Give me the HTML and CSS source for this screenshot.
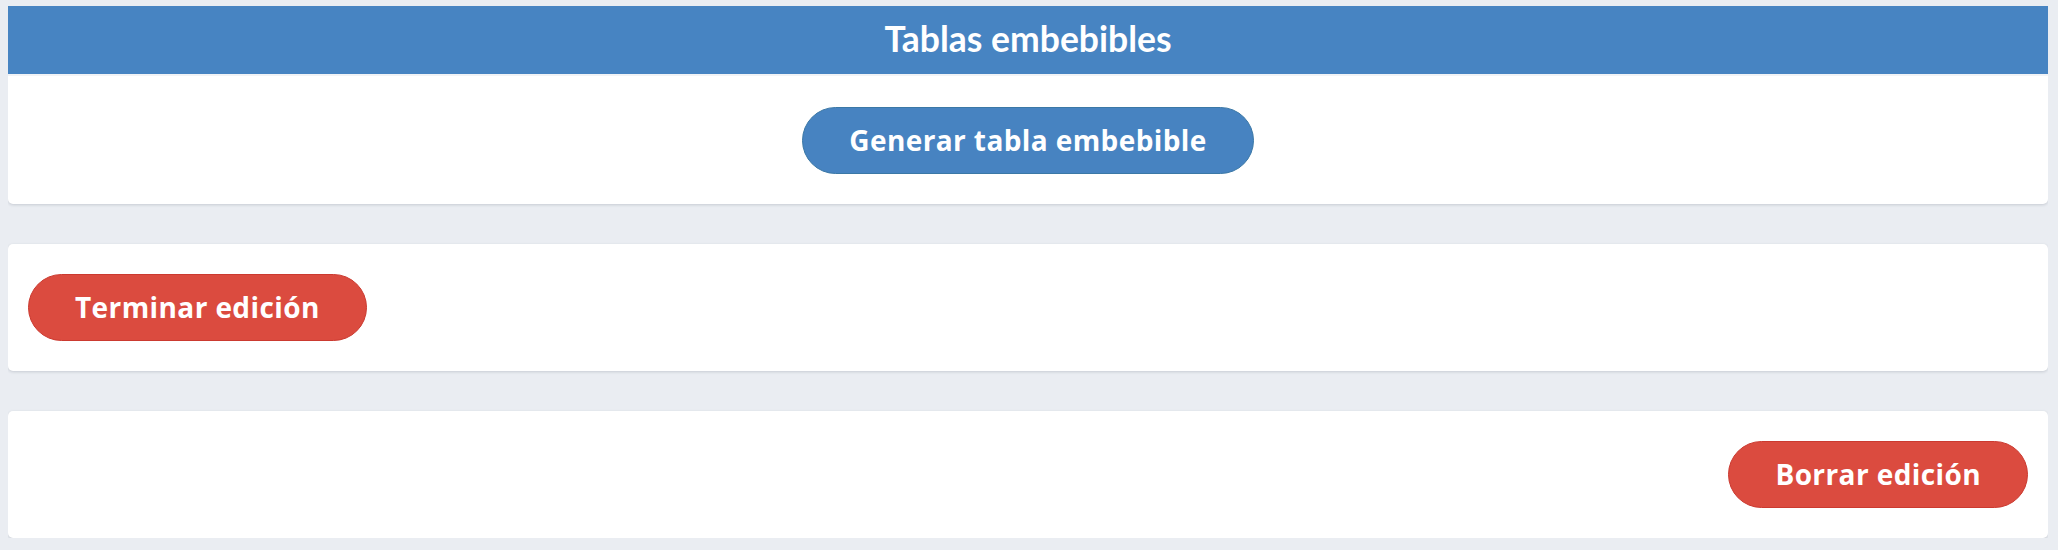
FILE: index.html
```html
<!DOCTYPE html>
<html lang="es">
<head>
<meta charset="utf-8">
<title>Tablas embebibles</title>
<link rel="stylesheet" href="styles.css">
</head>
<body>
  <section class="card card-first">
    <header class="card-header">
      <h2 class="card-title">Tablas embebibles</h2>
    </header>
    <div class="card-body center">
      <button class="btn btn-blue" type="button">Generar tabla embebible</button>
    </div>
  </section>

  <section class="card">
    <div class="card-body start">
      <button class="btn btn-red" type="button">Terminar edición</button>
    </div>
  </section>

  <section class="card">
    <div class="card-body end">
      <button class="btn btn-red" type="button">Borrar edición</button>
    </div>
  </section>
</body>
</html>
```

FILE: styles.css
```css
html, body {
  background: #eaedf2;
}

body {
  margin: 6px 10px 0 8px;
  font-family: "Open Sans", "Noto Sans", sans-serif;
  display: flex;
  flex-direction: column;
  gap: 40px;
}

.card {
  background: #ffffff;
  border-radius: 0 0 5px 5px;
  box-shadow: 0 1px 3px rgba(40, 50, 70, 0.18);
}

.card:not(.card-first) {
  border-radius: 5px;
}

.card-header {
  background: #4784c2;
  height: 68px;
  border-bottom: 2px solid #f1f3f6;
  display: flex;
  align-items: center;
  justify-content: center;
}

.card-title {
  margin: 0;
  color: #ffffff;
  font-family: "Lato", "Open Sans", sans-serif;
  font-weight: 700;
  font-size: 35.5px;
  line-height: 1;
  padding-bottom: 2px;
}

.card-body {
  display: flex;
  padding: 30px 20px 30px;
}

.card-first .card-body {
  padding-top: 31px;
}

.center { justify-content: center; }
.start { justify-content: flex-start; }
.end { justify-content: flex-end; }

.btn {
  font-family: "Open Sans", "Noto Sans", sans-serif;
  font-weight: 700;
  font-size: 28px;
  letter-spacing: 0.4px;
  line-height: 65px;
  color: #ffffff;
  padding: 0 46px;
  border-radius: 34px;
  border: 1px solid transparent;
  cursor: pointer;
}

.btn-blue {
  background: #4783c1;
  border-color: #3b78a6;
}

.btn-red {
  background: #db4b3f;
  border-color: #cb3a30;
}
```
